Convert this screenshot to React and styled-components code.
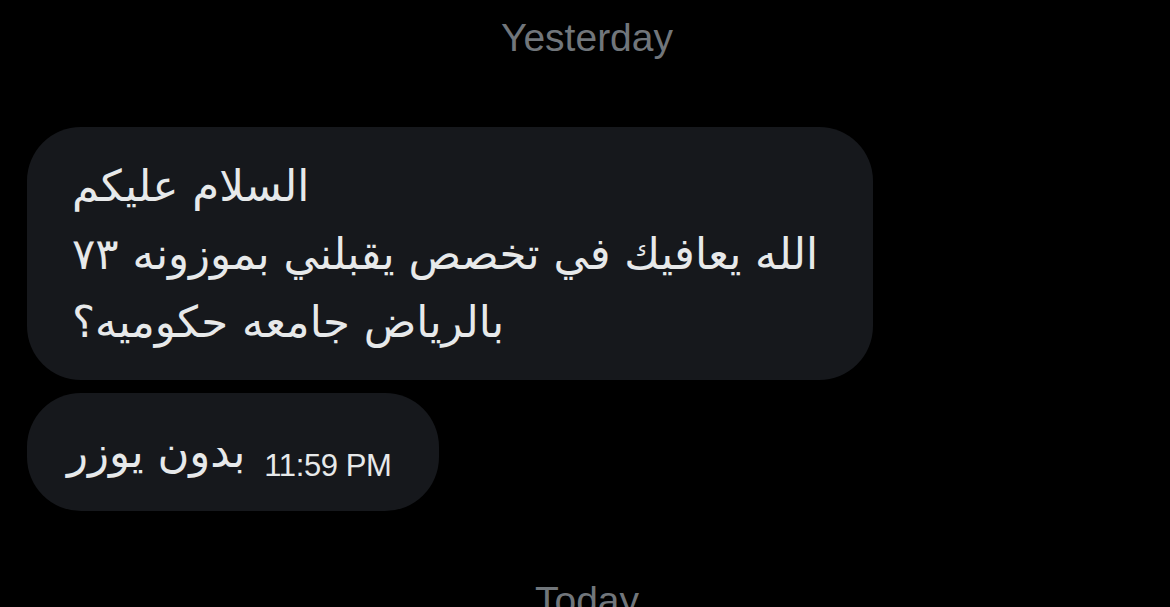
import React from 'react';
import styled, { createGlobalStyle } from 'styled-components';

const GlobalStyle = createGlobalStyle`
    html, body {
        margin: 0;
        padding: 0;
        background: #000;
    }
    body {
        font-family: "Liberation Sans", Arial, sans-serif;
        overflow: hidden;
    }
`

const Screen = styled.div`
    width: 1170px;
    height: 607px;
    background: #000;
    overflow: hidden;
`

const DayLabel = styled.div`
    text-align: center;
    color: #71767b;
    font-size: 39px;
    line-height: 44px;
    padding-left: 4px;
    padding-top: ${p => p.$top || 0}px;
`

const Thread = styled.div`
    display: flex;
    flex-direction: column;
    align-items: flex-start;
    gap: 13px;
    padding: 67px 0 0 27px;
`

const Bubble = styled.div`
    background: #16181c;
    color: #e7e9ea;
    border-radius: 54px;
    box-sizing: border-box;
    width: ${p => p.$width ? p.$width + 'px' : 'auto'};
    padding: ${p => p.$pad};
`

const ArabicText = styled.div`
    font-family: "DejaVu Sans", "Noto Sans", sans-serif;
    font-size: 43.5px;
    line-height: 68px;
    direction: rtl;
    text-align: left;
`

const Line = styled.div`
    white-space: nowrap;
`

const Inline = styled.div`
    display: flex;
    align-items: center;
    gap: 19px;
`

const Time = styled.span`
    font-size: 31px;
    letter-spacing: -0.4px;
    color: #e7e9ea;
    padding-top: 28px;
`

function App() {
    const lines = [
        'السلام عليكم',
        'الله يعافيك في تخصص يقبلني بموزونه ٧٣',
        'بالرياض جامعه حكوميه؟'
    ];

    return (
        <Screen>
            <GlobalStyle />
            <DayLabel $top={16}>Yesterday</DayLabel>
            <Thread>
                <Bubble $width={846} $pad="25px 50px 24px 45px">
                    <ArabicText>
                        {lines.map((item, index) => (
                            <Line key={index}>{item}</Line>
                        ))}
                    </ArabicText>
                </Bubble>
                <Bubble $pad="25px 47px 25px 40px">
                    <Inline>
                        <ArabicText>بدون يوزر</ArabicText>
                        <Time>11:59 PM</Time>
                    </Inline>
                </Bubble>
            </Thread>
            <DayLabel $top={68}>Today</DayLabel>
        </Screen>
    )
}

export default App;
